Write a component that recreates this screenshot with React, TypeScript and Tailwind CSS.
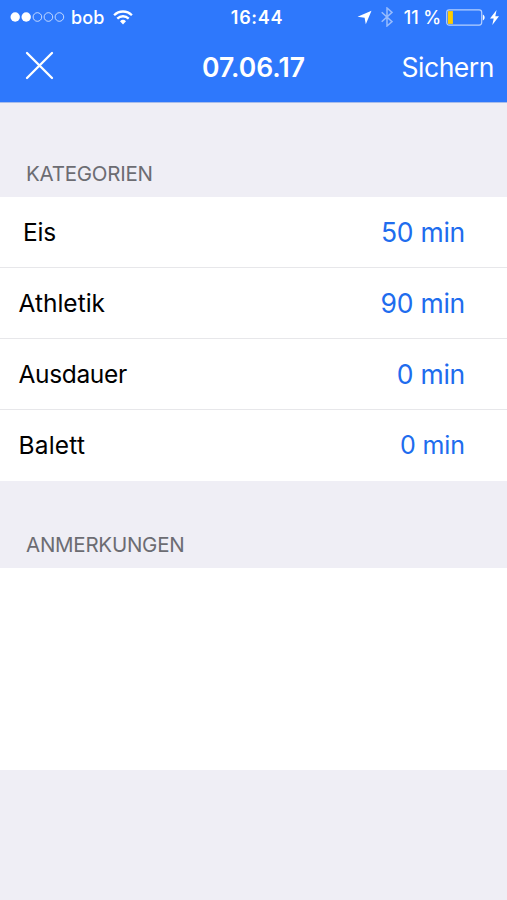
const categories = [
  { name: "Eis", minutes: 50, label: "pl-[23px] tracking-[-0.2px]", value: "text-[26.5px] tracking-[-0.25px]" },
  { name: "Athletik", minutes: 90, label: "pl-[18.5px]", value: "text-[26.5px] tracking-[-0.25px]" },
  { name: "Ausdauer", minutes: 0, label: "pl-[18.5px] tracking-[-0.35px]", value: "text-[26.5px] tracking-[-0.25px]" },
  { name: "Balett", minutes: 0, label: "pl-[18.5px] tracking-[0.2px]", value: "text-[25px] tracking-[-0.1px]" },
];

function SignalDots() {
  return (
    <svg className="block h-3 w-[56px]" viewBox="0 0 56 12" fill="none">
      <circle cx="5.2" cy="6" r="4.7" fill="white" />
      <circle cx="16.2" cy="6" r="4.7" fill="white" />
      <g stroke="white" strokeOpacity="0.7">
        <circle cx="27.4" cy="6" r="4.3" />
        <circle cx="38.4" cy="6" r="4.3" />
        <circle cx="49.4" cy="6" r="4.3" />
      </g>
    </svg>
  );
}

function WifiIcon() {
  return (
    <svg className="block h-[15px] w-5" viewBox="0 0 20 15" fill="none" stroke="white" strokeWidth="2.3">
      <path d="M1.1 5.2a12.6 12.6 0 0 1 17.8 0" />
      <path d="M4.3 8.6a8.1 8.1 0 0 1 11.4 0" />
      <path d="M10 14.5 7 11.3a4.3 4.3 0 0 1 6 0Z" fill="white" stroke="none" />
    </svg>
  );
}

function StatusBar() {
  return (
    <div className="grid h-[34px] grid-cols-3 items-center text-[18px] leading-none">
      <div className="flex items-center pl-[10px]">
        <SignalDots />
        <span className="ml-[5px] pt-px font-medium tracking-[0.1px]">bob</span>
        <span className="ml-[9px]">
          <WifiIcon />
        </span>
      </div>
      <div className="pt-px pl-[7px] text-center font-semibold tracking-[0.7px]">16:44</div>
      <div className="flex items-center justify-end pr-[8px]">
        <svg className="block h-[15px] w-[15px]" viewBox="0 0 15 15" fill="white">
          <path d="M14.5.8 8.8 14.2 7.6 7.8.5 6.8Z" />
        </svg>
        <svg className="ml-[9px] block h-5 w-3" viewBox="0 0 12 20" fill="none" stroke="white" strokeOpacity="0.5" strokeWidth="1.5">
          <path d="M.7 5.2 11 14.6 6 19V1l5 4.4L.7 14.8" />
        </svg>
        <span className="ml-[11px] pt-px font-medium tracking-[-0.1px] whitespace-nowrap">11 %</span>
        <svg className="ml-[5px] block h-[17px] w-[39px]" viewBox="0 0 39 17" fill="none">
          <rect x="0.7" y="0.9" width="35" height="15.2" rx="2.5" stroke="white" strokeOpacity="0.65" strokeWidth="1.2" />
          <rect x="1.9" y="2.1" width="5" height="12.8" fill="#ffcc00" />
          <path d="M36.8 5.5c2.4.7 2.4 5.3 0 6Z" fill="white" />
        </svg>
        <svg className="ml-[5px] block h-[15px] w-[9px]" viewBox="0 0 9 15" fill="white">
          <path d="M6.6 0 0 8.4h3.7L2.3 15 9 6.3H5.3Z" />
        </svg>
      </div>
    </div>
  );
}

function NavBar() {
  return (
    <div className="grid h-[66px] grid-cols-3 items-center leading-none">
      <button className="w-fit pl-[25px]" aria-label="Abbrechen">
        <svg className="-mt-[3px] block h-[29px] w-[29px]" viewBox="0 0 29 29" fill="none" stroke="white" strokeWidth="2.3" strokeLinecap="round">
          <path d="M2 2 27 27M27 2 2 27" />
        </svg>
      </button>
      <h1 className="text-center text-[26.5px] font-semibold">07.06.17</h1>
      <button className="pr-[13px] text-right text-[26.5px] tracking-[-0.45px]">Sichern</button>
    </div>
  );
}

export default function App() {
  return (
    <div className="min-h-[900px] w-[507px] bg-[#efeef5] font-['Inter',sans-serif] text-black">
      <header className="h-[103px] border-b border-[#a9bdea] bg-[#2e78fc] text-white">
        <StatusBar />
        <NavBar />
      </header>

      <section>
        <h2 className="flex h-[94px] items-end pb-[12px] pl-[26px] text-[20.5px] leading-[22px] tracking-[-0.25px] text-[#6c6c72]">
          KATEGORIEN
        </h2>
        <ul className="h-[284px] divide-y divide-[#e7e7ea] bg-white">
          {categories.map((c) => (
            <li key={c.name} className="flex h-[71px] items-center justify-between pr-[42px] leading-none">
              <span className={`text-[24.5px] ${c.label}`}>{c.name}</span>
              <span className={`text-[#206cee] ${c.value}`}>{c.minutes} min</span>
            </li>
          ))}
        </ul>
      </section>

      <section>
        <h2 className="flex h-[87px] items-end pb-[12px] pl-[26px] text-[20.5px] leading-[22px] tracking-[-0.25px] text-[#6c6c72]">
          ANMERKUNGEN
        </h2>
        <textarea className="block h-[202px] w-full resize-none bg-white p-4 text-[24px] outline-none" />
      </section>
    </div>
  );
}
